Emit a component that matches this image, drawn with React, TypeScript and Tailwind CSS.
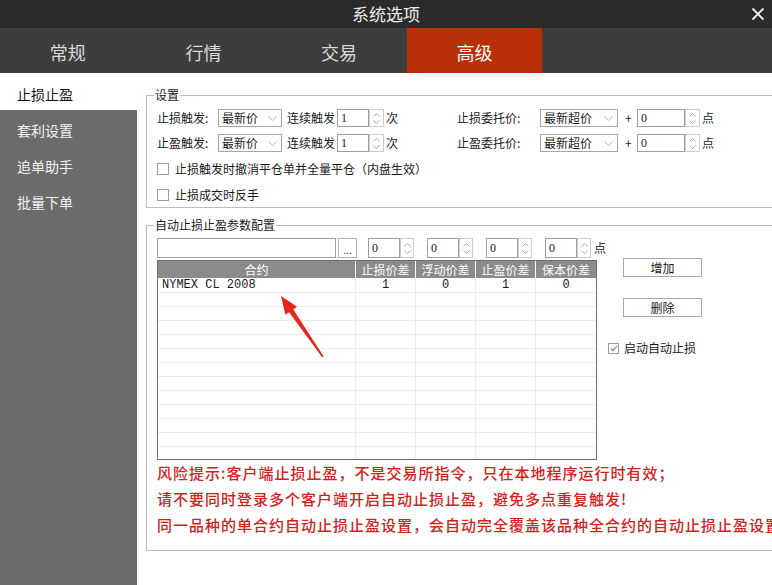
import React from 'react';

const Chev = ({ up }: { up?: boolean }) => (
  <svg width="7" height="4" viewBox="0 0 7 4">
    <path d={up ? 'M0.5 3.5L3.5 0.5L6.5 3.5' : 'M0.5 0.5L3.5 3.5L6.5 0.5'} fill="none" stroke="#a9a9a9" strokeWidth="1" />
  </svg>
);

const Spin = ({ tall }: { tall?: boolean }) => (
  <div
    className={`flex flex-col items-center justify-center gap-[3px] border border-[#cdcdcd] bg-white ${
      tall ? 'h-[20px] w-[14px]' : 'h-[18px] w-[15px]'
    }`}
  >
    <Chev up />
    <Chev />
  </div>
);

const Num = ({ v, w, tall }: { v: string; w: string; tall?: boolean }) => (
  <div
    className={`flex items-center border border-[#9f9f9f] bg-white pl-[3px] font-['Liberation_Serif',serif] text-[12px] ${w} ${
      tall ? 'h-[20px]' : 'h-[18px]'
    }`}
  >
    {v}
  </div>
);

const Sel = ({ text, w }: { text: string; w: string }) => (
  <div className={`flex h-[18px] items-center justify-between border border-[#a5a5a5] bg-white pl-[3px] pr-[4px] ${w}`}>
    <span className="text-[12px] leading-none">{text}</span>
    <svg width="9" height="5" viewBox="0 0 9 5">
      <path d="M0.5 0.5L4.5 4.5L8.5 0.5" fill="none" stroke="#bcbcbc" />
    </svg>
  </div>
);

const Check = ({ checked, small }: { checked?: boolean; small?: boolean }) => (
  <div
    className={`flex items-center justify-center border border-[#9d9d9d] bg-white ${
      small ? 'h-[11px] w-[11px]' : 'h-[12px] w-[12px]'
    }`}
  >
    {checked && (
      <svg width="8" height="7" viewBox="0 0 8 7">
        <path d="M1 3.5L3 5.5L7 1" stroke="#9a9a9a" strokeWidth="1.6" fill="none" />
      </svg>
    )}
  </div>
);

const cols = [
  { t: '合约', w: 'w-[198px]' },
  { t: '止损价差', w: 'w-[60px]' },
  { t: '浮动价差', w: 'w-[60px]' },
  { t: '止盈价差', w: 'w-[60px]' },
  { t: '保本价差', w: 'w-[60px]' },
];

const rows = [['NYMEX CL 2008', '1', '0', '1', '0'], ...Array.from({ length: 12 }, () => ['', '', '', '', ''])];

const warnings = [
  '风险提示:客户端止损止盈，不是交易所指令，只在本地程序运行时有效；',
  '请不要同时登录多个客户端开启自动止损止盈，避免多点重复触发!',
  '同一品种的单合约自动止损止盈设置，会自动完全覆盖该品种全合约的自动止损止盈设置',
];

export default function App() {
  return (
    <div className="relative h-[585px] w-[772px] overflow-hidden bg-white font-['Noto_Sans_CJK_SC','Liberation_Sans',sans-serif] text-[#1a1a1a]">
      {/* title bar */}
      <div className="grid h-[28px] grid-cols-[1fr_auto_1fr] items-center bg-[#2b2b2b]">
        <div />
        <span className="text-[17px] text-[#ececec]">系统选项</span>
        <div className="flex justify-end pr-[7px]">
          <svg width="14" height="14" viewBox="0 0 14 14">
            <path d="M1.5 1.5L12.5 12.5M12.5 1.5L1.5 12.5" stroke="#f0f0f0" strokeWidth="1.8" />
          </svg>
        </div>
      </div>

      {/* tabs */}
      <div className="flex h-[45px] bg-[#3d3d3d] text-[18px]">
        {['常规', '行情', '交易', '高级'].map((t, i) => (
          <div
            key={t}
            className={`flex w-[135.6px] items-center justify-center pt-[4px] ${
              i === 3 ? 'bg-[#b92f07] text-white' : 'text-[#dcdcdc]'
            }`}
          >
            {t}
          </div>
        ))}
      </div>

      <div className="flex h-[512px]">
        {/* sidebar */}
        <aside className="w-[137px] shrink-0 bg-[#6b6b6b]">
          <div className="flex h-[37px] items-center bg-white pl-[17px] pt-[6px] text-[14px] text-[#111]">止损止盈</div>
          {['套利设置', '追单助手', '批量下单'].map((s) => (
            <div key={s} className="flex h-[36px] items-center pl-[17px] pt-[4px] text-[14px] text-[#f2f2f2]">
              {s}
            </div>
          ))}
        </aside>

        <main className="flex-1 pl-[9px] pt-[14px] text-[12px]">
          {/* 设置 */}
          <fieldset className="w-[640px] border border-[#bcbcbc]">
            <legend className="ml-[7px] px-[1px] text-[12px] leading-[16px]">设置</legend>
            <div className="pb-[3px] pl-[10px] pt-[6px]">
              {[
                ['止损触发:', '止损委托价:'],
                ['止盈触发:', '止盈委托价:'],
              ].map(([a, b], i) => (
                <div key={a} className={`flex h-[18px] items-center ${i ? 'mt-[7px]' : ''}`}>
                  <div className="flex w-[300px] items-center">
                    <span className="w-[61px]">{a}</span>
                    <Sel text="最新价" w="w-[64px]" />
                    <span className="ml-[5px] w-[50px]">连续触发</span>
                    <Num v="1" w="w-[32px]" />
                    <Spin />
                    <span className="ml-[2px]">次</span>
                  </div>
                  <span className="w-[83px]">{b}</span>
                  <Sel text="最新超价" w="w-[78px]" />
                  <span className="ml-[7px] w-[12px]">+</span>
                  <Num v="0" w="w-[48px]" />
                  <Spin />
                  <span className="ml-[2px]">点</span>
                </div>
              ))}
              {['止损触发时撤消平仓单并全量平仓（内盘生效）', '止损成交时反手'].map((t) => (
                <div key={t} className="mt-[8px] flex h-[18px] items-center">
                  <Check />
                  <span className="ml-[6px]">{t}</span>
                </div>
              ))}
            </div>
          </fieldset>

          {/* 自动止损止盈参数配置 */}
          <fieldset className="mt-[9px] w-[640px] border border-[#bcbcbc]">
            <legend className="ml-[7px] px-[1px] text-[12px] leading-[16px]">自动止损止盈参数配置</legend>
            <div className="flex pb-[12px] pl-[10px] pt-[5px]">
              <div className="w-[451px] shrink-0">
                <div className="flex h-[20px] items-center">
                  <div className="h-[20px] w-[179px] border border-[#9f9f9f] bg-white" />
                  <div className="ml-[2px] flex h-[20px] w-[19px] items-end justify-center border border-[#b4b4b4] bg-white pb-[2px] text-[10px] leading-none">
                    ...
                  </div>
                  {[0, 1, 2, 3].map((k) => (
                    <div key={k} className={`flex items-center ${k === 0 ? 'ml-[11px]' : 'ml-[13px]'}`}>
                      <Num v="0" w="w-[32px]" tall />
                      <Spin tall />
                    </div>
                  ))}
                  <span className="ml-[3px]">点</span>
                </div>

                {/* table */}
                <div className="mt-[2px] w-[440px] border border-[#6e6e6e]">
                  <div className="flex h-[17px] bg-[#8b8b8b] text-white">
                    {cols.map((c, i) => (
                      <div
                        key={c.t}
                        className={`flex items-center justify-center ${c.w} ${i < 4 ? 'border-r border-white' : ''}`}
                      >
                        {c.t}
                      </div>
                    ))}
                  </div>
                  <div className="h-[181px] overflow-hidden bg-white">
                    {rows.map((r, ri) => (
                      <div key={ri} className={`flex border-b border-[#ececec] ${ri === 0 ? 'h-[15px]' : 'h-[14px]'}`}>
                        {r.map((v, ci) => (
                          <div
                            key={ci}
                            className={`flex items-center font-['Liberation_Mono',monospace] text-[12px] leading-none ${cols[ci].w} ${
                              ci === 0 ? 'pl-[4px]' : 'justify-center'
                            } ${ci < 4 ? 'border-r border-[#ececec]' : ''}`}
                          >
                            {v}
                          </div>
                        ))}
                      </div>
                    ))}
                  </div>
                </div>

                <div className="whitespace-nowrap text-[15px] font-medium leading-[26px] tracking-[1px] text-[#d3221a]">
                  {warnings.map((w) => (
                    <div key={w}>{w}</div>
                  ))}
                </div>
              </div>

              <div className="flex flex-col pt-[20px]">
                <button className="ml-[15px] flex h-[19px] w-[79px] items-center justify-center border border-[#a9a9a9] bg-white text-[12px]">
                  增加
                </button>
                <button className="ml-[15px] mt-[21px] flex h-[19px] w-[79px] items-center justify-center border border-[#a9a9a9] bg-white text-[12px]">
                  删除
                </button>
                <div className="mt-[24px] flex h-[14px] items-center">
                  <Check checked small />
                  <span className="ml-[5px] whitespace-nowrap">启动自动止损</span>
                </div>
              </div>
            </div>
          </fieldset>
        </main>
      </div>

      {/* annotation arrow */}
      <svg className="absolute left-[277px] top-[292px]" width="50" height="68" viewBox="0 0 50 68">
        <polygon
          points="4,4 20,14.8 16.3,17.4 46.7,64.5 45.3,65.5 12.1,20.2 8.4,22.8"
          fill="#e8261e"
        />
      </svg>
    </div>
  );
}
